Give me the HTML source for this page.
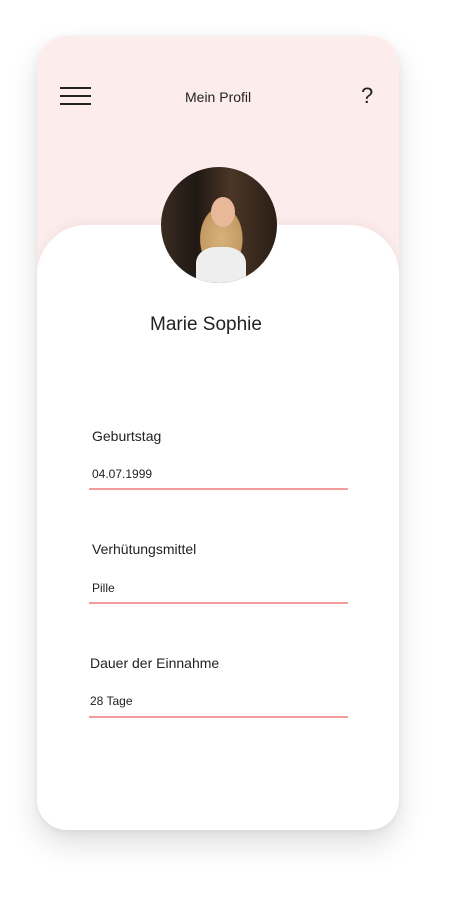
<!DOCTYPE html>
<html><head><meta charset="utf-8"><style>
body{margin:0;width:450px;height:899px;background:#fff;position:relative;overflow:hidden;font-family:"Liberation Sans",sans-serif;color:#222}
.phone{position:absolute;left:37px;top:36px;width:362px;height:794px;border-radius:30px;background:#fdecec;overflow:hidden;box-shadow:0 14px 30px rgba(0,0,0,.13),0 2px 8px rgba(0,0,0,.06)}
.card{position:absolute;left:0;top:189px;width:362px;height:605px;background:#fff;border-radius:50px 50px 30px 30px;box-shadow:0 -4px 10px rgba(0,0,0,.04)}
.t{position:absolute;white-space:nowrap}
.line{position:absolute;left:89px;width:259px;height:2px;background:#f39c9c}
.avatar{position:absolute;left:161px;top:167px;width:116px;height:116px;border-radius:50%;overflow:hidden;background:radial-gradient(ellipse 30% 45% at 52% 62%,#d7b07a 0,#c49a63 60%,transparent 62%),linear-gradient(90deg,#3a2c22 0,#1f1813 30%,#4a3626 60%,#2a1e16 100%)}
</style></head><body>
<div class="phone"><div class="card"></div></div>
<div style="position:absolute;left:60px;top:87px;width:31px;height:2px;background:#222"></div>
<div style="position:absolute;left:60px;top:95px;width:31px;height:2px;background:#222"></div>
<div style="position:absolute;left:60px;top:103px;width:31px;height:2px;background:#222"></div>
<div class="t" style="left:185px;top:89px;font-size:14px">Mein Profil</div>
<div class="t" style="left:361px;top:83px;font-size:22px;font-weight:300">?</div>
<div class="avatar">
<div style="position:absolute;left:50px;top:30px;width:24px;height:30px;border-radius:50%;background:#e8b898"></div>
<div style="position:absolute;left:35px;top:80px;width:50px;height:40px;border-radius:40% 40% 0 0;background:#eee"></div>
</div>
<div class="t" style="left:150px;top:314px;font-size:19px">Marie Sophie</div>
<div class="t" style="left:92px;top:428px;font-size:14px">Geburtstag</div>
<div class="t" style="left:92px;top:467px;font-size:12px">04.07.1999</div>
<div class="line" style="top:488px"></div>
<div class="t" style="left:92px;top:541px;font-size:14px">Verhütungsmittel</div>
<div class="t" style="left:92px;top:581px;font-size:12px">Pille</div>
<div class="line" style="top:602px"></div>
<div class="t" style="left:90px;top:655px;font-size:14px">Dauer der Einnahme</div>
<div class="t" style="left:90px;top:694px;font-size:12px">28 Tage</div>
<div class="line" style="top:716px"></div>
</body></html>
